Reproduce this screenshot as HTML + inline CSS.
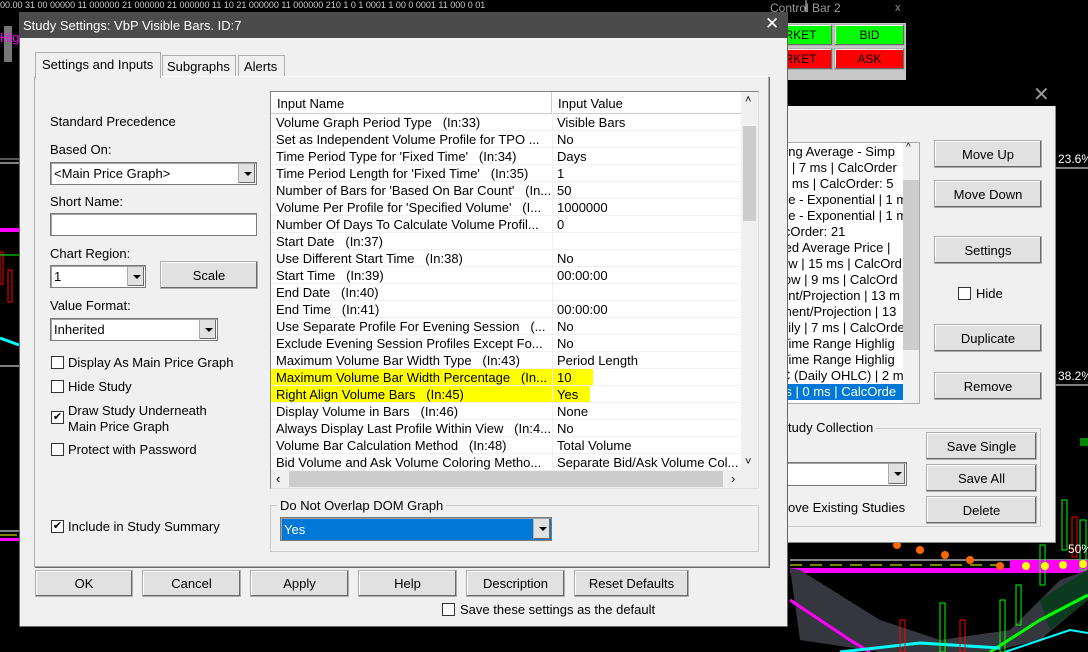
<!DOCTYPE html>
<html><head><meta charset="utf-8"><style>
*{box-sizing:border-box;margin:0;padding:0}
body{width:1088px;height:652px;background:#000;position:relative;overflow:hidden;font-family:"Liberation Sans",sans-serif;font-size:13px;color:#000}
.a{position:absolute}
.btn{position:absolute;background:#e1e1e1;border:1px solid #adadad;box-shadow:inset -1px -1px 0 #696969, inset 1px 1px 0 #fff;text-align:center;font-size:13px;display:flex;align-items:center;justify-content:center}
.cb{position:absolute;width:13px;height:13px;border:1px solid #333;background:#fff;font-size:11px;line-height:11px;text-align:center}
.combo{position:absolute;background:#fff;border:1px solid #7a7a7a;box-shadow:inset 1px 1px 0 #a0a0a0;padding-left:3px;display:flex;align-items:center}
.dd{position:absolute;right:1px;top:1px;bottom:1px;width:17px;background:#e1e1e1;border-left:1px solid #adadad;box-shadow:inset -1px -1px 0 #696969}
.dd:after{content:"";position:absolute;left:5px;top:8px;border-left:4px solid transparent;border-right:4px solid transparent;border-top:4px solid #000}
.row{position:absolute;left:0;width:470px;height:17px;border-bottom:1px solid #f0f0f0;white-space:nowrap}
.row span{position:absolute;top:1px}
.n{left:5px;width:275px;overflow:hidden}
.v{left:286px}
.lst div{height:16px;line-height:16px;white-space:nowrap}
</style></head><body>
<svg class="a" style="left:0;top:0" width="1088" height="652">
<text x="0" y="8" fill="#ccc" font-size="9" font-family="Liberation Sans">00.00 31 00 00000 11 000000 21 000000 21 000000 11 10 21 000000 11 000000 210 1 0 1 0001 1 00 0 0001 11 000 0 01</text>
<line x1="806" y1="0" x2="806" y2="12" stroke="#ccc"/>
<text x="1058" y="163" fill="#fff" font-size="12">23.6%</text>
<line x1="1056" y1="168" x2="1088" y2="168" stroke="#fff"/>
<text x="1058" y="380" fill="#fff" font-size="12">38.2%</text>
<line x1="1056" y1="385" x2="1088" y2="385" stroke="#fff"/>
<path d="M790 560 L1088 560" stroke="#fff" stroke-width="1"/>
<path d="M790 565 L1088 565" stroke="#ff0" stroke-width="1" stroke-dasharray="12 8"/>
<rect x="790" y="568" width="298" height="5" fill="#f0f"/>
<rect x="1010" y="560" width="78" height="12" fill="#f0f"/>
<path d="M790 568 L800 570 L880 620 L940 640 L1010 630 L1060 580 L1088 570 L1088 600 L1040 640 L990 652 L880 652 L800 640 Z" fill="#34383e"/>
<path d="M1040 600 L1088 570 L1088 600 L1050 630 Z" fill="#0b3a1e"/>
<path d="M990 652 L1040 620 L1088 595" stroke="#0f0" stroke-width="3" fill="none"/>
<path d="M790 600 L850 640 L870 652" stroke="#f0f" stroke-width="3" fill="none"/>
<path d="M840 652 L920 643 L1000 648" stroke="#0ff" stroke-width="3" fill="none"/>
<path d="M1005 652 L1070 630 L1088 633" stroke="#0ff" stroke-width="2" fill="none"/>
<g fill="none" stroke="#0f0"><rect x="1062" y="500" width="5" height="50"/><rect x="1040" y="545" width="5" height="40"/><rect x="1016" y="585" width="5" height="40"/><rect x="1000" y="600" width="5" height="52"/><rect x="940" y="603" width="5" height="49"/><rect x="1080" y="520" width="6" height="50"/></g>
<g fill="none" stroke="#f00"><rect x="1072" y="517" width="5" height="40"/><rect x="960" y="620" width="5" height="32"/><rect x="900" y="620" width="5" height="32"/></g>
<g fill="#f60"><circle cx="897" cy="545" r="4"/><circle cx="920" cy="550" r="4"/><circle cx="945" cy="555" r="4"/><circle cx="970" cy="560" r="4"/><circle cx="1000" cy="566" r="4"/></g>
<g fill="#ff0"><circle cx="1026" cy="566" r="4"/><circle cx="1045" cy="566" r="4"/><circle cx="1063" cy="565" r="4"/><circle cx="1083" cy="564" r="4"/></g>
<text x="1068" y="553" fill="#fff" font-size="12">50%</text>
<rect x="1080" y="438" width="8" height="8" fill="#080"/>
<rect x="4" y="26" width="8" height="36" fill="#777"/>
<text x="0" y="42" fill="#f0f" font-size="13">Hig</text>
<line x1="0" y1="159" x2="19" y2="159" stroke="#aaa"/><line x1="0" y1="163" x2="19" y2="163" stroke="#fff"/>
<rect x="0" y="228" width="19" height="4" fill="#f0f"/>
<rect x="0" y="252" width="3" height="32" fill="none" stroke="#f00"/><rect x="8" y="270" width="4" height="32" fill="none" stroke="#f00"/>
<line x1="0" y1="255" x2="19" y2="255" stroke="#0f0"/>
<path d="M0 338 L19 345" stroke="#0ff" stroke-width="3"/>
<line x1="0" y1="366" x2="19" y2="366" stroke="#fff"/>
<line x1="0" y1="531" x2="19" y2="531" stroke="#fff"/>
<line x1="0" y1="535" x2="17" y2="535" stroke="#ff0"/>
<rect x="0" y="538" width="19" height="3" fill="#f0f"/>
</svg>

<div class="a" style="left:770px;top:1px;font-size:12px;color:#999">Control Bar 2</div>
<div class="a" style="left:895px;top:2px;font-size:11px;color:#999">x</div>
<div class="a" style="left:760px;top:23px;width:146px;height:58px;background:#c8c8c8"></div>
<div class="btn" style="left:760px;top:24px;width:73px;height:22px;background:#0f0;font-size:12px">ARKET</div>
<div class="btn" style="left:834px;top:24px;width:71px;height:22px;background:#0f0;font-size:12px">BID</div>
<div class="btn" style="left:760px;top:48px;width:73px;height:22px;background:#f00;font-size:12px">ARKET</div>
<div class="btn" style="left:834px;top:48px;width:71px;height:22px;background:#f00;font-size:12px">ASK</div>

<div class="a" style="left:760px;top:80px;width:296px;height:463px;background:#f0f0f0;border:1px solid #888"></div>
<div class="a" style="left:760px;top:80px;width:296px;height:26px;background:#000"></div>
<div class="a" style="left:1033px;top:82px;color:#999;font-size:20px">✕</div>
<div class="a lst" style="left:780px;top:142px;width:140px;height:262px;background:#fff;border:1px solid #aaa;overflow:hidden;padding-top:1px">
<div>ring Average - Simp</div><div>p | 7 ms | CalcOrder</div><div>2 ms | CalcOrder: 5</div><div>ge - Exponential | 1 m</div><div>ge - Exponential | 1 m</div><div>lcOrder: 21</div><div>ted Average Price |</div><div>ow | 15 ms | CalcOrd</div><div>low | 9 ms | CalcOrd</div><div>ent/Projection | 13 m</div><div>ment/Projection | 13</div><div>aily | 7 ms | CalcOrde</div><div>Time Range Highlig</div><div>Time Range Highlig</div><div>C (Daily OHLC) | 2 m</div><div style="background:#0078d7;color:#fff">rs | 0 ms | CalcOrde</div>
</div>
<div class="a" style="left:903px;top:143px;width:16px;height:260px;background:#f0f0f0"></div>
<div class="a" style="left:903px;top:180px;width:16px;height:170px;background:#cdcdcd"></div>
<div class="a" style="left:906px;top:142px;font-size:10px">^</div>
<div class="btn" style="left:934px;top:140px;width:108px;height:28px">Move Up</div>
<div class="btn" style="left:934px;top:180px;width:108px;height:28px">Move Down</div>
<div class="btn" style="left:934px;top:236px;width:108px;height:28px">Settings</div>
<div class="cb" style="left:958px;top:287px"></div><div class="a" style="left:976px;top:286px">Hide</div>
<div class="btn" style="left:934px;top:324px;width:108px;height:28px">Duplicate</div>
<div class="btn" style="left:934px;top:372px;width:108px;height:28px">Remove</div>
<div class="a" style="left:760px;top:428px;width:281px;height:99px;border:1px solid #ccc"></div>
<div class="a" style="left:788px;top:420px;background:#f0f0f0;padding-right:3px">tudy Collection</div>
<div class="combo" style="left:780px;top:462px;width:127px;height:24px"><div class="dd"></div></div>
<div class="a" style="left:788px;top:500px">ove Existing Studies</div>
<div class="btn" style="left:926px;top:432px;width:111px;height:28px">Save Single</div>
<div class="btn" style="left:926px;top:464px;width:111px;height:28px">Save All</div>
<div class="btn" style="left:926px;top:496px;width:111px;height:28px">Delete</div>

<div class="a" style="left:19px;top:12px;width:769px;height:615px;background:#f0f0f0;border:1px solid #666"></div>
<div class="a" style="left:19px;top:12px;width:769px;height:26px;background:#4b4b4b;color:#fff;padding:6px 0 0 4px;font-size:13px">Study Settings: VbP Visible Bars. ID:7</div>
<div class="a" style="left:765px;top:14px;color:#fff;font-size:17px">✕</div>
<div class="a" style="left:34px;top:76px;width:735px;height:491px;border:1px solid #adadad;border-top-color:#fff;box-shadow:1px 1px 0 #696969"></div>
<div class="a" style="left:35px;top:52px;width:126px;height:26px;background:#f0f0f0;border:1px solid #adadad;border-bottom:none;padding:4px 0 0 6px">Settings and Inputs</div>
<div class="a" style="left:162px;top:55px;width:74px;height:21px;border:1px solid #adadad;border-bottom:none;padding:3px 0 0 4px">Subgraphs</div>
<div class="a" style="left:238px;top:55px;width:47px;height:21px;border:1px solid #adadad;border-bottom:none;padding:3px 0 0 5px">Alerts</div>

<div class="a" style="left:50px;top:114px">Standard Precedence</div>
<div class="a" style="left:50px;top:142px">Based On:</div>
<div class="combo" style="left:50px;top:162px;width:207px;height:23px">&lt;Main Price Graph&gt;<div class="dd"></div></div>
<div class="a" style="left:50px;top:194px">Short Name:</div>
<div class="combo" style="left:50px;top:213px;width:207px;height:23px"></div>
<div class="a" style="left:50px;top:246px">Chart Region:</div>
<div class="combo" style="left:50px;top:265px;width:96px;height:23px">1<div class="dd"></div></div>
<div class="btn" style="left:160px;top:261px;width:98px;height:28px">Scale</div>
<div class="a" style="left:50px;top:298px">Value Format:</div>
<div class="combo" style="left:50px;top:318px;width:168px;height:23px">Inherited<div class="dd"></div></div>
<div class="cb" style="left:51px;top:356px"></div><div class="a" style="left:68px;top:355px">Display As Main Price Graph</div>
<div class="cb" style="left:51px;top:380px"></div><div class="a" style="left:68px;top:379px">Hide Study</div>
<div class="cb" style="left:51px;top:411px">✔</div><div class="a" style="left:68px;top:403px;line-height:16px">Draw Study Underneath<br>Main Price Graph</div>
<div class="cb" style="left:51px;top:443px"></div><div class="a" style="left:68px;top:442px">Protect with Password</div>
<div class="cb" style="left:51px;top:520px">✔</div><div class="a" style="left:68px;top:519px">Include in Study Summary</div>

<div class="a" style="left:270px;top:91px;width:489px;height:398px;background:#fff;border:1px solid #828282;border-right-color:#ddd;border-bottom-color:#ddd;overflow:hidden">
<div class="a" style="left:0;top:0;width:281px;height:22px;border-right:1px solid #ccc;border-bottom:1px solid #ccc;padding:4px 0 0 6px">Input Name</div>
<div class="a" style="left:282px;top:0;width:188px;height:22px;border-bottom:1px solid #ccc;padding:4px 0 0 5px">Input Value</div>
<div class="a" style="left:281px;top:22px;width:1px;height:356px;background:#f0f0f0"></div>
<div class="a" style="left:0;top:22px;width:470px">
<div class="row" style="top:0"><span class="n">Volume Graph Period Type &nbsp; (In:33)</span><span class="v">Visible Bars</span></div>
<div class="row" style="top:17px"><span class="n">Set as Independent Volume Profile for TPO ...</span><span class="v">No</span></div>
<div class="row" style="top:34px"><span class="n">Time Period Type for 'Fixed Time' &nbsp; (In:34)</span><span class="v">Days</span></div>
<div class="row" style="top:51px"><span class="n">Time Period Length for 'Fixed Time' &nbsp; (In:35)</span><span class="v">1</span></div>
<div class="row" style="top:68px"><span class="n">Number of Bars for 'Based On Bar Count' &nbsp; (In...</span><span class="v">50</span></div>
<div class="row" style="top:85px"><span class="n">Volume Per Profile for 'Specified Volume' &nbsp; (I...</span><span class="v">1000000</span></div>
<div class="row" style="top:102px"><span class="n">Number Of Days To Calculate Volume Profil...</span><span class="v">0</span></div>
<div class="row" style="top:119px"><span class="n">Start Date &nbsp; (In:37)</span><span class="v"></span></div>
<div class="row" style="top:136px"><span class="n">Use Different Start Time &nbsp; (In:38)</span><span class="v">No</span></div>
<div class="row" style="top:153px"><span class="n">Start Time &nbsp; (In:39)</span><span class="v">00:00:00</span></div>
<div class="row" style="top:170px"><span class="n">End Date &nbsp; (In:40)</span><span class="v"></span></div>
<div class="row" style="top:187px"><span class="n">End Time &nbsp; (In:41)</span><span class="v">00:00:00</span></div>
<div class="row" style="top:204px"><span class="n">Use Separate Profile For Evening Session &nbsp; (...</span><span class="v">No</span></div>
<div class="row" style="top:221px"><span class="n">Exclude Evening Session Profiles Except Fo...</span><span class="v">No</span></div>
<div class="row" style="top:238px"><span class="n">Maximum Volume Bar Width Type &nbsp; (In:43)</span><span class="v">Period Length</span></div>
<div class="row" style="top:255px"><span class="n" style="background:#ff0;top:0;height:16px;padding-top:1px;left:0;padding-left:5px;width:281px">Maximum Volume Bar Width Percentage &nbsp; (In...</span><span class="v" style="background:#ff0;top:0;height:16px;padding:1px 22px 0 0;left:282px;padding-left:4px">10</span></div>
<div class="row" style="top:272px"><span class="n" style="background:#ff0;top:0;height:16px;padding-top:1px;left:0;padding-left:5px;width:281px">Right Align Volume Bars &nbsp; (In:45)</span><span class="v" style="background:#ff0;top:0;height:16px;padding:1px 12px 0 0;left:282px;padding-left:4px">Yes</span></div>
<div class="row" style="top:289px"><span class="n">Display Volume in Bars &nbsp; (In:46)</span><span class="v">None</span></div>
<div class="row" style="top:306px"><span class="n">Always Display Last Profile Within View &nbsp; (In:4...</span><span class="v">No</span></div>
<div class="row" style="top:323px"><span class="n">Volume Bar Calculation Method &nbsp; (In:48)</span><span class="v">Total Volume</span></div>
<div class="row" style="top:340px"><span class="n">Bid Volume and Ask Volume Coloring Metho...</span><span class="v">Separate Bid/Ask Volume Col...</span></div>
</div>
<div class="a" style="left:470px;top:0;width:17px;height:378px;background:#f0f0f0"></div>
<div class="a" style="left:472px;top:34px;width:13px;height:95px;background:#cdcdcd"></div>
<div class="a" style="left:474px;top:2px;font-size:11px">˄</div>
<div class="a" style="left:474px;top:364px;font-size:11px">˅</div>
<div class="a" style="left:0;top:378px;width:487px;height:18px;background:#f0f0f0"></div>
<div class="a" style="left:18px;top:379px;width:434px;height:16px;background:#cdcdcd"></div>
<div class="a" style="left:5px;top:379px;font-size:13px">‹</div>
<div class="a" style="left:460px;top:379px;font-size:13px">›</div>
</div>

<div class="a" style="left:270px;top:505px;width:489px;height:47px;border:1px solid #ccc"></div>
<div class="a" style="left:277px;top:498px;background:#f0f0f0;padding:0 3px">Do Not Overlap DOM Graph</div>
<div class="combo" style="left:280px;top:517px;width:272px;height:24px;background:#0078d7;color:#fff;border-color:#7a7a7a">Yes<div class="dd"></div></div>

<div class="btn" style="left:35px;top:570px;width:98px;height:27px">OK</div>
<div class="btn" style="left:142px;top:570px;width:99px;height:27px">Cancel</div>
<div class="btn" style="left:250px;top:570px;width:99px;height:27px">Apply</div>
<div class="btn" style="left:358px;top:570px;width:99px;height:27px">Help</div>
<div class="btn" style="left:466px;top:570px;width:99px;height:27px">Description</div>
<div class="btn" style="left:574px;top:570px;width:115px;height:27px">Reset Defaults</div>
<div class="cb" style="left:442px;top:603px"></div><div class="a" style="left:460px;top:602px">Save these settings as the default</div>
</body></html>
